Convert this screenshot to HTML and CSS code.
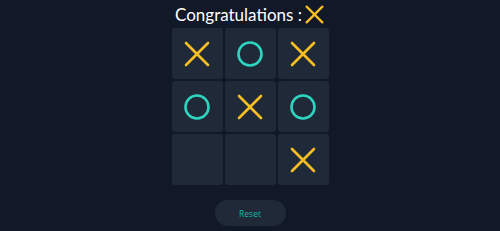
FILE: index.html
```html
<!DOCTYPE html>
<html>
<head>
    <meta charset="UTF-8">
    <title>Tic Tac Toe</title>
    <link rel="stylesheet" href="styles.css">
</head>
<body>
    <div class="Game">
        <h1 class="Title">Congratulations :<span class="Winner"><svg viewBox="0 0 24 24" width="21" height="21"><path d="M3 3 L21 21 M21 3 L3 21" class="XMark"/></svg></span></h1>
        <div class="Board">
            <div class="Cell"><svg viewBox="0 0 26 26" width="26" height="26"><path d="M2 2 L24 24 M24 2 L2 24" class="XMark"/></svg></div>
            <div class="Cell"><svg viewBox="0 0 26 26" width="26" height="26"><circle cx="13" cy="13" r="11.5" class="OMark"/></svg></div>
            <div class="Cell"><svg viewBox="0 0 26 26" width="26" height="26"><path d="M2 2 L24 24 M24 2 L2 24" class="XMark"/></svg></div>
            <div class="Cell"><svg viewBox="0 0 26 26" width="26" height="26"><circle cx="13" cy="13" r="11.5" class="OMark"/></svg></div>
            <div class="Cell"><svg viewBox="0 0 26 26" width="26" height="26"><path d="M2 2 L24 24 M24 2 L2 24" class="XMark"/></svg></div>
            <div class="Cell"><svg viewBox="0 0 26 26" width="26" height="26"><circle cx="13" cy="13" r="11.5" class="OMark"/></svg></div>
            <div class="Cell"></div>
            <div class="Cell"></div>
            <div class="Cell"><svg viewBox="0 0 26 26" width="26" height="26"><path d="M2 2 L24 24 M24 2 L2 24" class="XMark"/></svg></div>
        </div>
        <button class="ResetButton">Reset</button>
    </div>
</body>
</html>
```

FILE: styles.css
```css
body {
    margin: 0;
    height: 100vh;
    background-color: #111827;
    font-family: "Lato", "Open Sans", sans-serif;
}

.Game {
    display: flex;
    flex-direction: column;
    align-items: center;
}

.Title {
    display: flex;
    align-items: center;
    height: 28px;
    margin: 0;
    color: white;
    font-size: 17px;
    font-weight: 400;
}

.Winner {
    display: flex;
    margin-left: 2px;
}

.Board {
    display: grid;
    grid-template-columns: repeat(3, 51px);
    grid-template-rows: repeat(3, 51px);
    gap: 2px;
}

.Cell {
    display: flex;
    align-items: center;
    justify-content: center;
    background-color: #1f2937;
    border-radius: 3px;
}

.XMark {
    fill: none;
    stroke: #fbbf24;
    stroke-width: 2.6;
    stroke-linecap: round;
}

.OMark {
    fill: none;
    stroke: #2dd4bf;
    stroke-width: 2.6;
}

.ResetButton {
    margin-top: 15px;
    width: 71px;
    height: 26px;
    border: none;
    border-radius: 13px;
    background-color: #1f2937;
    color: #14b8a6;
    font-family: "Open Sans", sans-serif;
    font-size: 8.5px;
}
```
